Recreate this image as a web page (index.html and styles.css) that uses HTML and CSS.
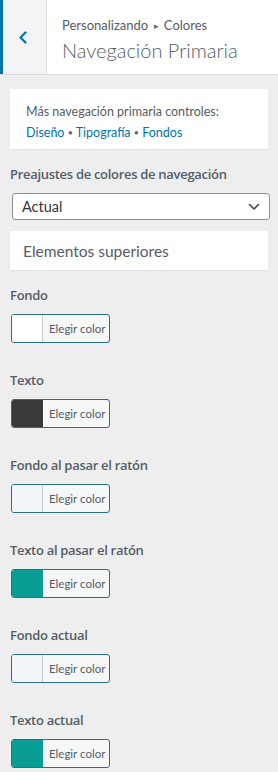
FILE: index.html
```html
<!DOCTYPE html>
<html lang="es">
<head>
<meta charset="utf-8">
<link rel="stylesheet" href="styles.css">
</head>
<body>
<div class="header">
  <div class="back">
    <svg width="10" height="13" viewBox="0 0 10 13"><path d="M7.5 1.5 L2.5 6.5 L7.5 11.5" fill="none" stroke="#0073aa" stroke-width="2.2" stroke-linecap="round" stroke-linejoin="round"/></svg>
  </div>
  <div class="titles">
    <div class="crumb">Personalizando <span class="tri">▸</span> Colores</div>
    <div class="title">Navegación Primaria</div>
  </div>
</div>
<div class="content">
  <div class="info">
    <div class="info-line">Más navegación primaria controles:</div>
    <div class="info-line"><a>Diseño</a> <span class="dot">•</span> <a>Tipografía</a> <span class="dot">•</span> <a>Fondos</a></div>
  </div>
  <div class="label first">Preajustes de colores de navegación</div>
  <div class="select">
    <span>Actual</span>
    <svg width="12" height="8" viewBox="0 0 12 8"><path d="M1.5 1.5 L6 6 L10.5 1.5" fill="none" stroke="#444" stroke-width="1.6" stroke-linecap="round" stroke-linejoin="round"/></svg>
  </div>
  <div class="section">Elementos superiores</div>

  <div class="control">
    <div class="label">Fondo</div>
    <div class="colorbtn"><span class="swatch sw-white"></span><span class="btntext">Elegir color</span></div>
  </div>
  <div class="control">
    <div class="label">Texto</div>
    <div class="colorbtn"><span class="swatch sw-dark"></span><span class="btntext">Elegir color</span></div>
  </div>
  <div class="control">
    <div class="label">Fondo al pasar el ratón</div>
    <div class="colorbtn"><span class="swatch sw-light"></span><span class="btntext">Elegir color</span></div>
  </div>
  <div class="control">
    <div class="label">Texto al pasar el ratón</div>
    <div class="colorbtn"><span class="swatch sw-teal"></span><span class="btntext">Elegir color</span></div>
  </div>
  <div class="control">
    <div class="label">Fondo actual</div>
    <div class="colorbtn"><span class="swatch sw-light"></span><span class="btntext">Elegir color</span></div>
  </div>
  <div class="control">
    <div class="label">Texto actual</div>
    <div class="colorbtn"><span class="swatch sw-teal"></span><span class="btntext">Elegir color</span></div>
  </div>
</div>
</body>
</html>
```
FILE: styles.css
```css
* { box-sizing: border-box; }
html, body { margin: 0; padding: 0; }
body {
  background: #eeeeee;
  font-family: Lato, "Noto Sans", sans-serif;
  color: #555d66;
  width: 278px;
  height: 772px;
  overflow: hidden;
}
.header {
  display: flex;
  height: 75px;
  background: #fff;
  border-bottom: 1px solid #dddddd;
}
.back {
  width: 47px;
  flex: none;
  background: #f4f4f6;
  border-left: 3px solid #0073aa;
  border-right: 1px solid #dddddd;
  display: flex;
  align-items: center;
  justify-content: center;
  padding-right: 4px;
}
.titles {
  padding: 15px 0 0 15px;
}
.crumb {
  font-size: 13px;
  line-height: 20px;
  color: #555d66;
}
.tri { font-size: 9px; vertical-align: 1px; margin: 0 2px; color: #666; }
.title {
  font-size: 20px;
  font-weight: 300;
  line-height: 28px;
  color: #555d66;
}
.content {
  padding: 14px 10px 0 10px;
}
.info {
  background: #fff;
  height: 60px;
  padding: 12px 16px 0 16px;
  box-shadow: 0 1px 1px rgba(0,0,0,0.04);
}
.info-line {
  font-size: 12.5px;
  line-height: 21px;
  color: #555d66;
}
.info a { color: #0073aa; }
.dot { font-size: 9px; vertical-align: 1px; color: #666; }
.label {
  font-family: "Open Sans", "Noto Sans", sans-serif;
  font-stretch: 90.5%;
  font-size: 13px;
  letter-spacing: -0.3px;
  font-weight: 600;
  line-height: 20px;
  color: #555d66;
  margin-bottom: 9px;
}
.label.first { margin-top: 15px; }
.select {
  margin-left: 2px;
  width: 258px;
  height: 27px;
  background: #fff;
  border: 1px solid #8c8f94;
  border-radius: 3px;
  display: flex;
  align-items: center;
  justify-content: space-between;
  padding: 0 9px 0 9px;
  font-size: 14.5px;
  color: #32373c;
}
.section {
  margin-top: 11px;
  height: 39px;
  background: #fff;
  padding-left: 13px;
  font-size: 15.5px;
  line-height: 40px;
  color: #555d66;
  box-shadow: 0 1px 1px rgba(0,0,0,0.04);
}
.control { margin-top: 15px; margin-bottom: 27px; }
.control + .control { margin-top: 0; }
.colorbtn {
  margin-left: 1px;
  width: 99px;
  height: 29px;
  border: 1px solid #2b6e92;
  border-radius: 3px;
  background: #f6f7f7;
  display: flex;
  overflow: hidden;
}
.swatch {
  width: 31px;
  flex: none;
  border-right: 1px solid #c9cccf;
}
.sw-white { background: #ffffff; }
.sw-dark { background: #3a3a3a; border-right-color: #3a3a3a; }
.sw-light { background: #f2f5f7; }
.sw-teal { background: #0a9d96; border-right-color: #0a9d96; }
.btntext {
  font-size: 11.5px;
  line-height: 27px;
  padding-left: 6px;
  color: #555d66;
}
```
